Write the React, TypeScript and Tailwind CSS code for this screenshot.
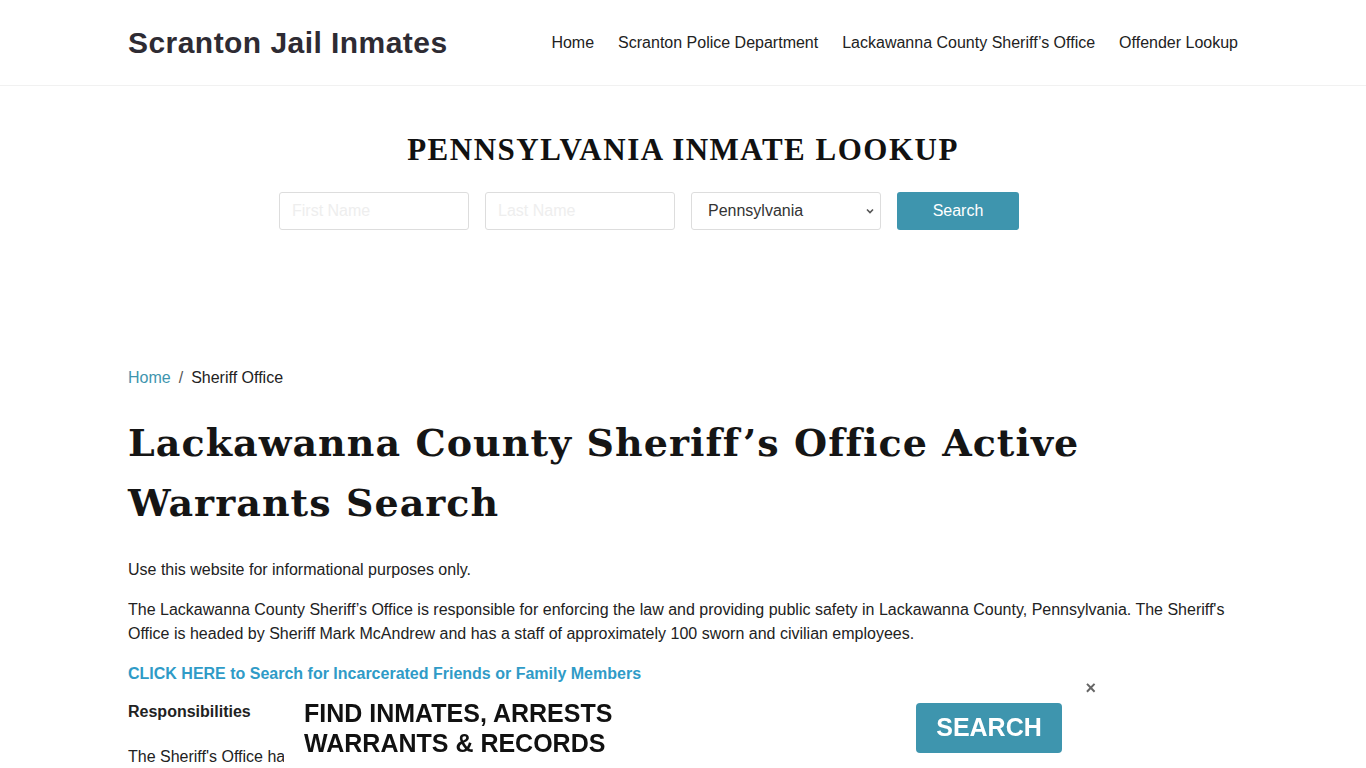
const teal = "#3e95ae";

const NavBar = () => {
  return (
    <header className="h-[86px] border-b border-[#f1f1f1] bg-white">
      <div className="mx-auto max-w-[1140px] px-[15px] h-full flex items-center justify-between">
        <a className="text-[30px] font-bold text-[#2e2b33] tracking-[0.45px]">Scranton Jail Inmates</a>
        <nav className="flex gap-6 text-[16px] text-[#222]">
          <a>Home</a>
          <a>Scranton Police Department</a>
          <a>Lackawanna County Sheriff’s Office</a>
          <a>Offender Lookup</a>
        </nav>
      </div>
    </header>
  );
};

const LookupForm = () => {
  return (
    <section className="pt-[46px] pb-[136px]">
      <h2 className="text-center text-[31px] font-bold tracking-[1.5px] text-[#111] font-['Liberation_Serif',serif] leading-[36px]">
        PENNSYLVANIA INMATE LOOKUP
      </h2>
      <div className="mt-[24px] ml-[279px] flex gap-4">
        <input
          placeholder="First Name"
          className="w-[190px] h-[38px] rounded-[3px] border border-[#ddd] px-3 text-[16px] placeholder:text-[#eee] outline-none"
        />
        <input
          placeholder="Last Name"
          className="w-[190px] h-[38px] rounded-[3px] border border-[#ddd] px-3 text-[16px] placeholder:text-[#eee] outline-none"
        />
        <div className="relative w-[190px] h-[38px] rounded-[3px] border border-[#ddd] flex items-center pl-4 text-[16px] text-[#333]">
          Pennsylvania
          <svg className="absolute right-[6px] top-[15px]" width="8" height="6" viewBox="0 0 8 6">
            <path d="M1 1.5 L4 4.5 L7 1.5" stroke="#555" strokeWidth="1.6" fill="none" />
          </svg>
        </div>
        <button className="w-[122px] h-[38px] rounded-[3px] text-white text-[16px] bg-[#3e95ae]">Search</button>
      </div>
    </section>
  );
};

const Overlay = () => {
  return (
    <div className="fixed left-[284px] top-[684px] w-[816px] h-[84px] bg-white">
      <button className="absolute right-[4px] -top-[6px] text-[#666] text-[18px] leading-[20px] font-bold">×</button>
      <div className="flex items-center justify-between pl-[20px] pr-[38px] pt-[14px]">
        <p className="text-[25px] font-bold leading-[30px] text-[#111] font-['Liberation_Sans',Arial,sans-serif]">
          FIND INMATES, ARRESTS
          <br />
          WARRANTS &amp; RECORDS
        </p>
        <button className="-mt-[1px] w-[146px] h-[50px] rounded-[4px] text-white text-[25px] font-bold" style={{ background: teal }}>
          SEARCH
        </button>
      </div>
    </div>
  );
};

export default function App() {
  return (
    <div className="min-h-screen bg-white font-['Liberation_Sans',Arial,sans-serif] text-[#222]">
      <NavBar />
      <LookupForm />

      <main className="mx-auto max-w-[1140px] px-[15px]">
        <div className="flex items-center text-[16px] leading-[24px]">
          <a className="text-[#3e95ae]">Home</a>
          <span className="px-2 text-[#555]">/</span>
          <span className="text-[#222]">Sheriff Office</span>
        </div>

        <h1 className="mt-[23px] text-[38px] leading-[60px] font-bold tracking-[1.05px] text-[#151515] font-['DejaVu_Serif',serif]">
          Lackawanna County Sheriff’s Office Active
          <br />
          Warrants Search
        </h1>

        <div className="mt-[25px] text-[16px] leading-[24px] text-[#222]">
          <p>Use this website for informational purposes only.</p>
          <p className="mt-4">
            The Lackawanna County Sheriff’s Office is responsible for enforcing the law and providing public safety in Lackawanna County, Pennsylvania. The Sheriff's Office is headed by Sheriff Mark McAndrew and has a staff of approximately 100 sworn and civilian employees.
          </p>
          <p className="mt-4">
            <a className="font-bold text-[#2f9bc7]">CLICK HERE to Search for Incarcerated Friends or Family Members</a>
          </p>
          <p className="mt-[14px] font-bold">Responsibilities</p>
          <p className="mt-[21px]">
            The Sheriff's Office has a number of responsibilities, including serving civil process, transporting prisoners, and providing court security.
          </p>
        </div>
      </main>

      <Overlay />
    </div>
  );
}
